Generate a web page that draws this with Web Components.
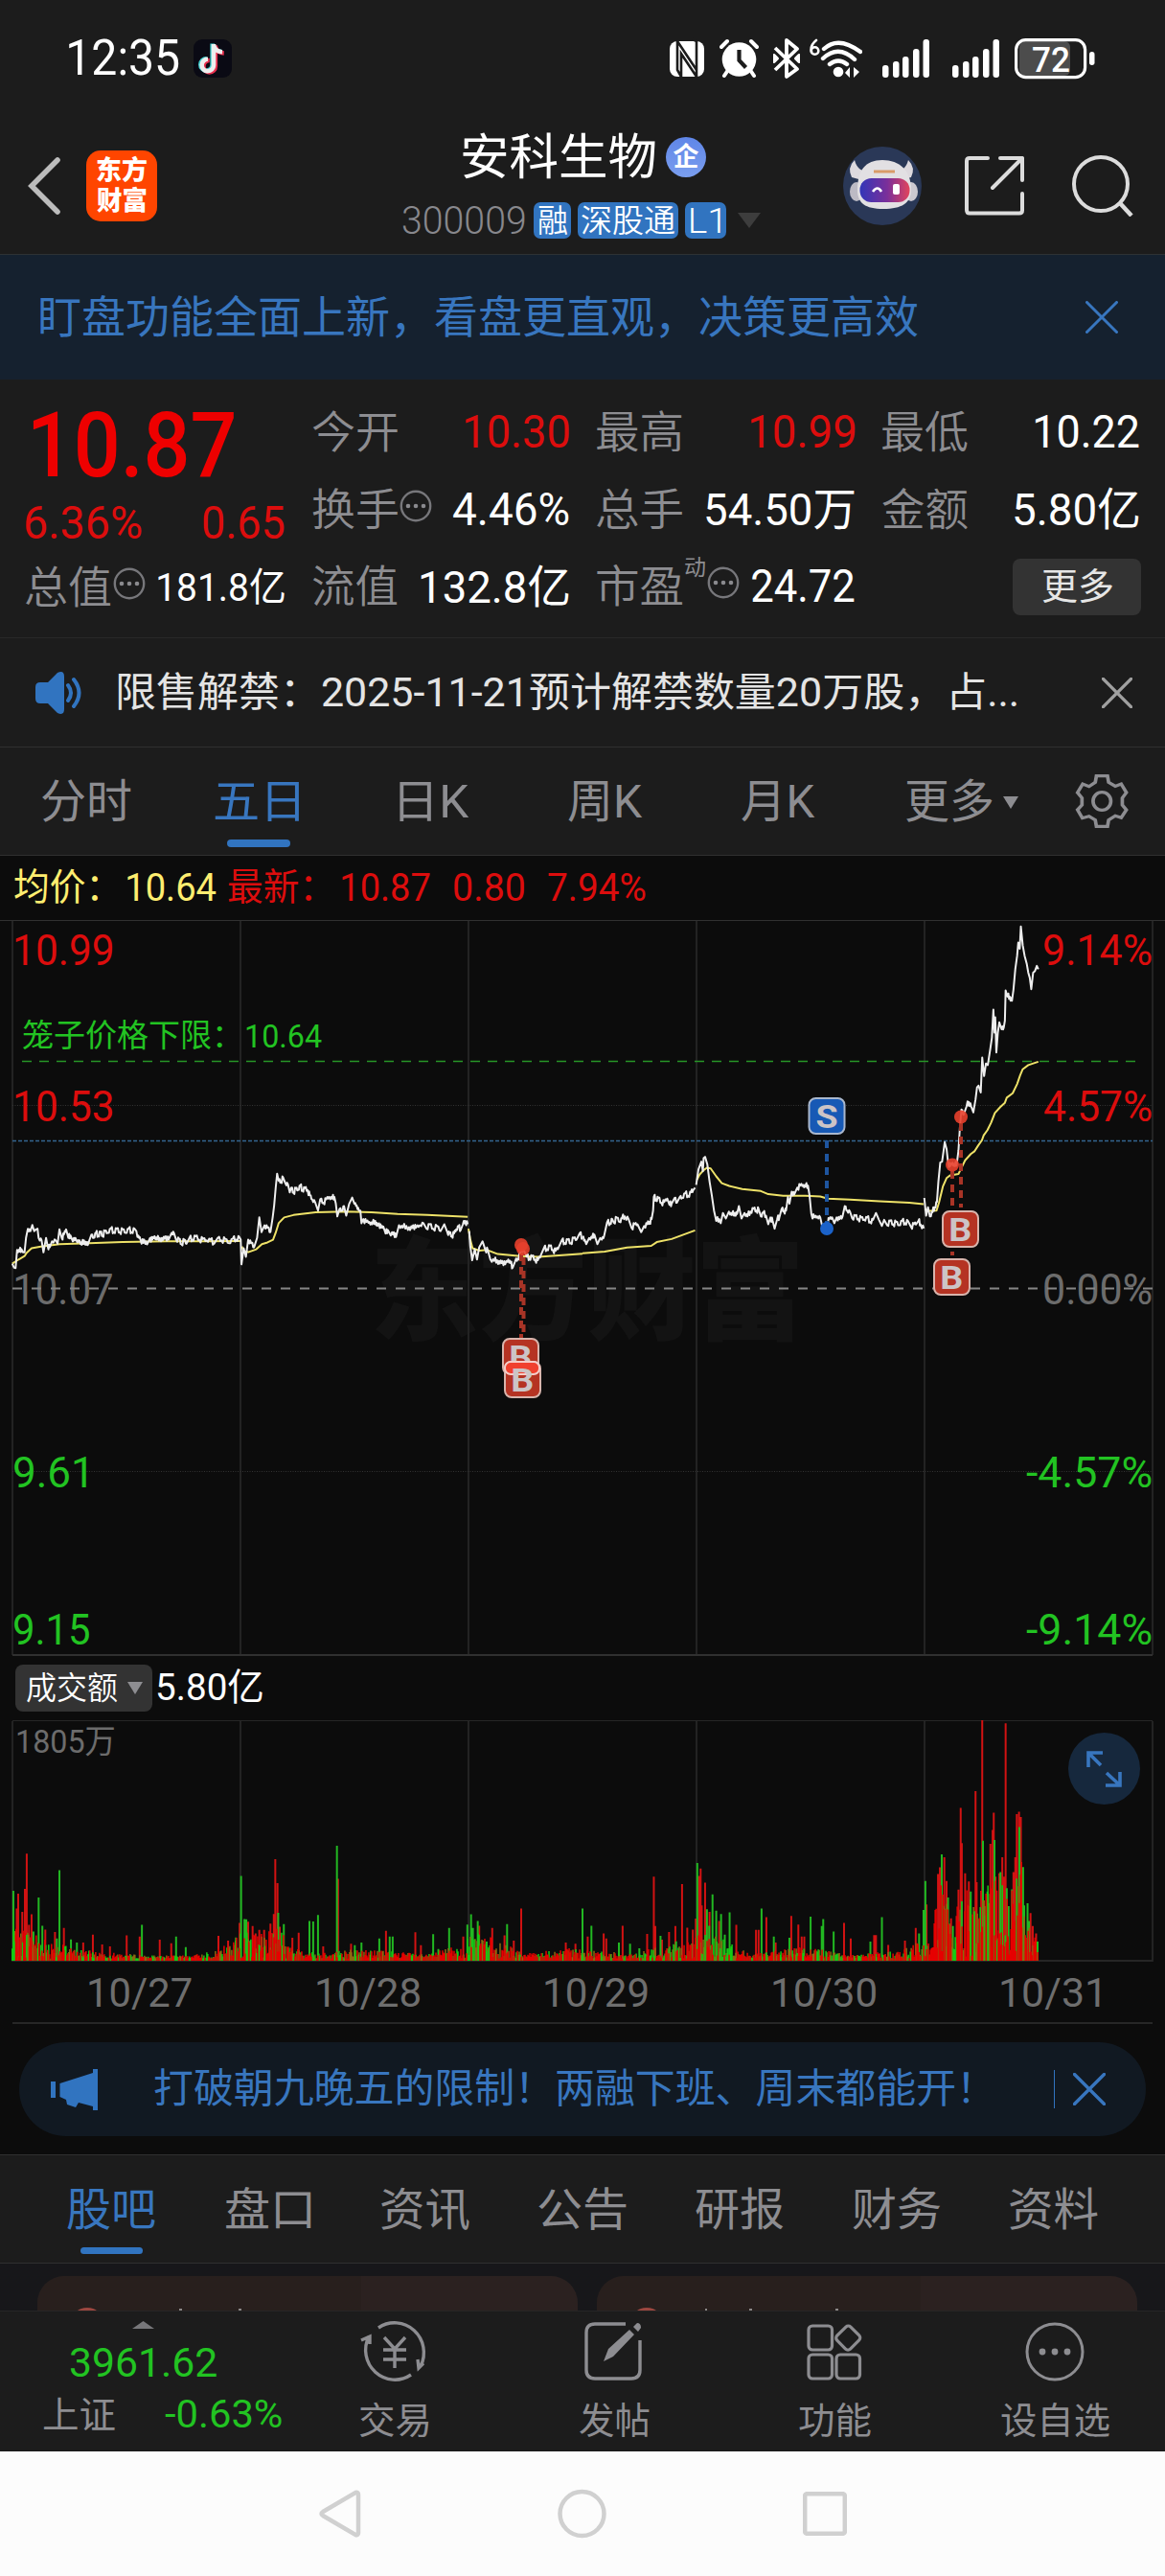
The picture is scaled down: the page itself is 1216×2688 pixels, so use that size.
<!DOCTYPE html>
<html lang="zh-CN">
<head>
<meta charset="utf-8">
<title>安科生物 300009</title>
<style>
html,body{margin:0;padding:0;background:#1c1c1c}
body{width:1216px;font-family:Roboto,"Noto Sans CJK SC",sans-serif;color:#fff}
</style>
</head>
<body>
<stock-page></stock-page>
<script>
const FAMILY = 'Roboto,"Noto Sans CJK SC",sans-serif';
const pen = document.createElement('canvas').getContext('2d');
// Ink extents of a string, so that text can be set to an exact visible width.
function ink(text, size, weight) {
  pen.font = `${weight} ${size}px ${FAMILY}`;
  const m = pen.measureText(text);
  return { left: m.actualBoundingBoxLeft, width: m.actualBoundingBoxLeft + m.actualBoundingBoxRight };
}
class FitText extends HTMLElement {
  constructor() { super(); this.attachShadow({ mode: 'open' }); }
  connectedCallback() {
    const w = +this.getAttribute('w'), s = +this.getAttribute('s'), wt = this.getAttribute('wt') || 400;
    const c = this.getAttribute('c');
    const m = ink(this.textContent.trim(), s, wt), k = w / m.width;
    this.shadowRoot.innerHTML = `<style>
      :host{display:block;flex:none;width:${w}px;height:${s}px;${c ? `color:${c};` : ''}font:${wt} ${s}px/${s}px ${FAMILY};white-space:nowrap}
      span{display:inline-block;transform-origin:0 0;transform:translateX(${m.left * k}px) scaleX(${k})}
    </style><span><slot></slot></span>`;
  }
}
customElements.define('fit-text', FitText);

function define(name, css, html) {
  customElements.define(name, class extends HTMLElement {
    constructor() {
      super();
      this.attachShadow({ mode: 'open' }).innerHTML =
        `<style>*{box-sizing:border-box}:host{display:block;box-sizing:border-box}svg{display:block;flex:none}${css}</style>` +
        (typeof html === 'function' ? html() : html);
    }
  });
}
const svgText = (x, w, base, s, fill, text, wt = 400) => {
  const m = ink(text, s, wt), k = w / m.width;
  return `<text transform="translate(${(x + m.left * k).toFixed(2)} ${base}) scale(${k.toFixed(4)} 1)" font-size="${s}" font-weight="${wt}" fill="${fill}">${text}</text>`;
};

/* ---------- status bar ---------- */
const signal = x => `<svg width="49" height="44" viewBox="921 39 49 44" style="margin-left:${x}px" fill="#fff">
  <rect x="921" y="68" width="6.5" height="13" rx="3"/><rect x="932" y="64" width="6.5" height="17" rx="3"/><rect x="942" y="59" width="6.5" height="22" rx="3"/><rect x="953" y="51" width="6.5" height="30" rx="3"/><rect x="963.5" y="41" width="6.5" height="40" rx="3"/></svg>`;
define('status-bar', `:host{display:flex;align-items:center;height:122px;padding:0 73px 0 72px}`, `
<fit-text w="115" s="52">12:35</fit-text>
<svg width="40" height="40" viewBox="0 0 40 40" style="margin-left:15px"><rect width="40" height="40" rx="9" fill="#0a0a14"/>
 <g fill="none" stroke-width="4.6"><path d="M20.5 5v22a6.2 6.2 0 1 1-6-6.2M20.5 6c.8 4 4 7 9 7.300" stroke="#3fd0d0" transform="translate(-.8 -.6)"/><path d="M21.500 5v22a6.200 6.200 0 1 1-6-6.200M21.500 6c.8 4 4 7 9 7.300" stroke="#e8304f" transform="translate(1.300 1.200)"/><path d="M21 5v22a6.200 6.200 0 1 1-6-6.200M21 6c.8 4 4 7 9 7.300" stroke="#eee"/></g></svg>
<svg width="36" height="44" viewBox="0 0 36 44" style="margin-left:auto"><rect y="4" width="36" height="37" rx="8" fill="#fff"/><path d="M8 4v30l4 7M8 4l20 30V11M12 41V17l16 24V4l-4 -2" fill="none" stroke="#1c1c1c" stroke-width="2.600"/></svg>
<svg width="41" height="44" viewBox="0 0 41 44" style="margin-left:16px"><g stroke="#fff" stroke-width="4" stroke-linecap="round"><path d="M2 10l6-6M39 10l-6-6M9 34l-4 6M32 34l4 6"/></g><circle cx="20.500" cy="23" r="17.800" fill="#fff"/><path d="M20.500 13v11l7 7.500" fill="none" stroke="#1c1c1c" stroke-width="4.200"/></svg>
<svg width="28" height="44" viewBox="0 0 28 44" style="margin-left:15px"><path d="M2 11L25 33 14 41V3l11 9L2 34M1 19v6l3-3zM27 19v6l-3-3z" fill="none" stroke="#fff" stroke-width="3.800" stroke-linejoin="round"/></svg>
<svg width="55" height="44" viewBox="0 0 55 44" style="margin-left:10px"><g fill="none" stroke="#fff" stroke-linecap="round"><path d="M7 3C2 7 1 11 2 15" stroke-width="2.600"/><circle cx="5.500" cy="14" r="3.800" stroke-width="2.600"/><path d="M15 12q15-14 38 3M14 22q16-15 33 1M21 28q9-7 18 0" stroke-width="4.400"/></g><circle cx="30" cy="36" r="5.300" fill="#fff"/><path d="M42 31v11l-5-5zM46 42V31l6 5z" fill="#fff"/></svg>
${signal(21)}${signal(24)}
<svg width="84" height="44" viewBox="0 0 84 44" style="margin-left:16px" font-family="Roboto"><rect x="5" y="4" width="53" height="36" rx="6" fill="#4c4c4c"/><rect x="1.600" y="2.600" width="72" height="39" rx="10" fill="none" stroke="#fff" stroke-width="3.200"/><rect x="78" y="15" width="5.500" height="14" rx="2.700" fill="#fff"/>${svgText(19, 38, 35.5, 37, '#fff', '72', 500)}</svg>`);

/* ---------- header ---------- */
define('app-header', `:host{display:flex;align-items:center;height:144px;padding-left:29px;border-bottom:1px solid #2d3234}
.logo{width:74px;height:74px;border-radius:15px;background:#ff4500;margin-left:26px;padding:8px 11px;display:flex;flex-direction:column;gap:5px}
.t{width:374px;height:143px;margin-left:256px;padding-top:16px;display:flex;flex-direction:column;gap:21px}
.r1{display:flex;align-items:center;height:52px;padding-left:63px;gap:11px}
.r2{display:flex;align-items:center;height:38px}
.tag{height:38px;border-radius:7px;background:#3174c0;display:flex;align-items:center;justify-content:center}
.q{width:42px;height:42px;border-radius:50%;background:linear-gradient(#5f86e8,#7a9eee);display:flex;align-items:center;justify-content:center}`, `
<svg width="35" height="62" viewBox="0 0 35 62"><path d="M31 4L4 31l27 27" fill="none" stroke="#bcbcbc" stroke-width="5.600" stroke-linecap="round"/></svg>
<div class="logo"><fit-text w="52" s="27" wt="900">东方</fit-text><fit-text w="52" s="27" wt="900">财富</fit-text></div>
<div class="t"><div class="r1"><fit-text w="201" s="51">安科生物</fit-text><div class="q"><fit-text w="27" s="27" wt="700">企</fit-text></div></div>
<div class="r2"><fit-text w="128" s="41" c="#88888d" wt="350">300009</fit-text>
<div class="tag" style="width:39px;margin-left:9px"><fit-text w="30" s="33" wt="350">融</fit-text></div>
<div class="tag" style="width:105px;margin-left:7px"><fit-text w="97" s="33" wt="350">深股通</fit-text></div>
<div class="tag" style="width:43px;margin-left:7px"><fit-text w="31" s="37" wt="350">L1</fit-text></div>
<svg width="24" height="16" style="margin-left:12px"><path d="M0 0h24L12 16z" fill="#3d3d3d"/></svg></div></div>
<svg width="82" height="82" viewBox="0 0 82 82" style="margin-left:86px"><defs><linearGradient id="v" x1="0" x2="1"><stop offset="0" stop-color="#3236b8"/><stop offset=".55" stop-color="#7b2f9a"/><stop offset="1" stop-color="#e2455c"/></linearGradient></defs>
<circle cx="41" cy="41" r="41" fill="#2a3857"/><path d="M12 14q-8 8-3 18l11 3 6-9q-11 0-14-12zM68 14q8 8 3 18l-11 3-6-9q11 0 14-12z" fill="#ddd9de"/><ellipse cx="14" cy="47" rx="7" ry="10" fill="#bcbac4"/><ellipse cx="71" cy="47" rx="7" ry="10" fill="#cbc8d0"/><path d="M15 45c0-20 8-31 26-31s30 11 30 31c0 14-10 20-29 20S15 59 15 45z" fill="#e2e0e3"/><rect x="17.500" y="33" width="52" height="25" rx="12" fill="url(#v)"/><path d="M32 26h22" stroke="#d99b68" stroke-width="3"/><path d="M31 47q5-7 9 0" fill="none" stroke="#fff" stroke-width="2.600"/><rect x="52" y="39" width="7" height="11" rx="2" fill="#fff"/></svg>
<svg width="62" height="62" viewBox="0 0 62 62" style="margin-left:45px"><path d="M24 2H5q-3 0-3 3v51q0 3.500 3 3.500h52q3 0 3-3V39M37 2h23v23M60 2L29 33" fill="none" stroke="#dcdcdc" stroke-width="4" stroke-linecap="round" stroke-linejoin="round"/></svg>
<svg width="64" height="64" viewBox="0 0 64 64" style="margin-left:50px"><circle cx="30" cy="30" r="28" fill="none" stroke="#dcdcdc" stroke-width="4"/><path d="M50 50l12 13" stroke="#dcdcdc" stroke-width="4.500"/></svg>`);

const cross = (s, c, w = 3, st = '') => `<svg width="${s}" height="${s}" viewBox="0 0 34 34" style="${st}"><path d="M1.500 1.500l31 31M32.500 1.500l-31 31" stroke="${c}" stroke-width="${w}" stroke-linecap="round"/></svg>`;

define('top-banner', `:host{display:flex;align-items:center;justify-content:space-between;height:130px;padding:0 49px 0 42px;background:#15212f}`,
`<fit-text w="916" s="46" c="#3876bf">盯盘功能全面上新，看盘更直观，决策更高效</fit-text>${cross(34, '#3876bf')}`);

/* ---------- quote panel ---------- */
const more = `<svg width="34" height="34" viewBox="0 0 34 34" style="margin:0 0 8px 2px"><circle cx="17" cy="17" r="15.200" fill="none" stroke="#77777b" stroke-width="2.400"/><g fill="#8a8a8e"><circle cx="9" cy="17" r="2.300"/><circle cx="17" cy="17" r="2.300"/><circle cx="25" cy="17" r="2.300"/></g></svg>`;
const RED = '#dc0d0d', G = '#8d8d91';
define('quote-cell', `:host{display:flex;align-items:center;justify-content:space-between}.l{display:flex;align-items:center}`, `<div class="l"><slot name="label"></slot></div><slot></slot>`);
const lab = t => `<fit-text slot="label" w="89" s="46" c="${G}" wt="350">${t}</fit-text>`;
const ic = more.replace('<svg', '<svg slot="label"');
define('quote-panel', `:host{display:grid;grid-template-columns:270px 268px 269px 268px;column-gap:29px;height:270px;padding:15px 27px 0 27px;border-bottom:1px solid #282828}
.c{display:flex;flex-direction:column}.c quote-cell{height:80.500px}
.btn{margin:0 -2px 0 auto;width:134px;height:59px;border-radius:8px;background:#333;display:flex;align-items:center;justify-content:center}`, `
<div class="c"><div style="height:106px;display:flex;align-items:center;padding-left:7px"><fit-text w="210" s="95" wt="500" c="#ee0000">10.87</fit-text></div>
<quote-cell style="height:58px"><fit-text slot="label" w="121" s="48" c="${RED}">6.36%</fit-text><fit-text w="85" s="48" c="${RED}">0.65</fit-text></quote-cell>
<quote-cell style="height:76px">${lab('总值')}${ic}<fit-text w="132" s="41">181.8亿</fit-text></quote-cell></div>
<div class="c"><quote-cell>${lab('今开')}<fit-text w="108" s="48" c="${RED}">10.30</fit-text></quote-cell>
<quote-cell>${lab('换手')}${ic}<fit-text w="121" s="48">4.46%</fit-text></quote-cell>
<quote-cell>${lab('流值')}<fit-text w="155" s="47">132.8亿</fit-text></quote-cell></div>
<div class="c"><quote-cell>${lab('最高')}<fit-text w="108" s="48" c="${RED}">10.99</fit-text></quote-cell>
<quote-cell>${lab('总手')}<fit-text w="155" s="47">54.50万</fit-text></quote-cell>
<quote-cell>${lab('市盈')}<fit-text slot="label" w="21" s="23" c="${G}" style="margin:0 0 40px 3px">动</fit-text>${ic}<fit-text w="107" s="48">24.72</fit-text></quote-cell></div>
<div class="c"><quote-cell>${lab('最低')}<fit-text w="108" s="48">10.22</fit-text></quote-cell>
<quote-cell>${lab('金额')}<fit-text w="130" s="47">5.80亿</fit-text></quote-cell>
<quote-cell><div class="btn"><fit-text w="73" s="38" c="#e6e6e6">更多</fit-text></div></quote-cell></div>`);

define('notice-bar', `:host{display:flex;align-items:center;height:114px;padding:0 34px 0 37px;border-bottom:1px solid #303030}`, `
<svg width="48" height="46" viewBox="0 0 48 46"><path d="M5 12h8L23 2q7-3 7 4v34q0 7-7 4L13 34H5q-5 0-5-5V17q0-5 5-5z" fill="#3174c0"/><path d="M34 15q6 8 0 16M40 9q11 14 0 28" fill="none" stroke="#3174c0" stroke-width="4" stroke-linecap="round"/></svg>
<fit-text w="938" s="42" c="#e4e4e4" style="margin-left:38px">限售解禁：2025-11-21预计解禁数量20万股，占...</fit-text>${cross(32, '#a0a0a0', 3.6, 'margin-left:auto')}`);

/* ---------- tabs ---------- */
define('period-tabs', `:host{display:grid;grid-template-columns:180px 180px 186px 172px 188px 216px 1fr;align-items:center;height:113px;border-bottom:1px solid #303030}
.t{display:flex;justify-content:center;align-items:center;height:112px;position:relative;padding-top:2px}.on::after{content:"";position:absolute;left:57px;top:96px;width:66px;height:8px;border-radius:4px;background:#3174c0}`, `
<div class="t"><fit-text w="93" s="48" c="${G}">分时</fit-text></div><div class="t on" style="padding-right:4px"><fit-text w="88" s="48" c="#3876bf">五日</fit-text></div>
<div class="t"><fit-text w="73" s="48" c="${G}">日K</fit-text></div><div class="t"><fit-text w="78" s="48" c="${G}">周K</fit-text></div><div class="t"><fit-text w="77" s="48" c="${G}">月K</fit-text></div>
<div class="t" style="justify-content:flex-start;padding-left:40px"><fit-text w="90" s="48" c="${G}">更多</fit-text><svg width="16" height="13" style="margin-left:11px"><path d="M0 0h16L8 13z" fill="${G}"/></svg></div>
<svg width="56" height="56" viewBox="1325 504 145 168" preserveAspectRatio="none"><g fill="none" stroke="${G}"><path d="M1383 509h30l3 20 18 12 16-7 14 27-11 17v22l11 15-14 25-16-6-18 13-3 20h-30l-3-20-17-12-18 6-13-26 12-15v-22l-12-17 14-27 17 8 17-13z" stroke-width="9.500"/><ellipse cx="1398" cy="588" rx="24" ry="28" stroke-width="9.500"/></g></svg>`);

define('price-info', `:host{display:flex;align-items:center;height:67px;padding-left:15px;background:#0c0c0c}`, `
<fit-text w="87" s="39" c="#ffee70">均价：</fit-text><fit-text w="93" s="41" c="#ffee70" style="margin-left:31px">10.64</fit-text>
<fit-text w="87" s="39" c="${RED}" style="margin-left:12px">最新：</fit-text><fit-text w="92" s="41" c="${RED}" style="margin-left:32px">10.87</fit-text><fit-text w="73" s="41" c="${RED}" style="margin-left:25px">0.80</fit-text><fit-text w="102" s="41" c="${RED}" style="margin-left:25px">7.94%</fit-text>`);

/* ---------- price chart ---------- */
const priceA = ['33,1060 38,1072 42,1073 46,1020 52,1025 58,1018 62,1027 66,1027 70,985 75,958 82,965 87,947 92,965 97,960 101,958 104,985 112,992 117,1027 124,985 128,1008 134,1012 140,995 150,992 155,1002 160,960 166,985 172,975 178,960 184,985 190,978 196,995 203,985 208,998 214,992 220,1005 226,992 232,1005 238,1000 246,975 252,985 258,970 264,978 270,968 276,978 282,965 290,970 298,958 306,968 314,958 322,968 330,960 338,970 346,958 354,968 362,958 367,965 370,982 376,982 381,1002 388,990 396,1004 404,985 410,990 416,980 422,990 430,985 438,992 446,980 454,990 462,970 468,970 474,990 482,988 488,1003 496,990 502,1002 510,985 518,990 526,980 536,990 546,988 556,992 566,990 576,1002 586,985 596,992 606,988 616,1000 626,988 636,990 644,982 648,990 650,1062 656,1015 662,1040 668,990 676,1000 684,1012 692,985 698,925 704,968 712,948 720,955 728,968 734,925 738,890 742,840 746,797 750,818 756,820 762,808 768,825 775,828 780,852 784,838 790,853 796,840 802,845 808,832 814,845 820,840 828,845 834,860 840,872 848,880 856,905 862,872 870,882 878,872 886,865 894,870 900,865 904,885 908,922 914,900 920,905 926,892 932,920 940,885 948,867 954,885 960,890 966,905 970,905 973,942 978,930 986,938 994,938 1002,945 1010,935 1016,950 1020,942 1026,955 1032,952 1038,972 1044,962 1052,978 1060,968 1066,982 1074,948 1084,955 1094,950 1104,962 1112,948 1120,955 1130,948 1140,942 1148,958 1156,945 1166,958 1176,950 1186,965 1196,945 1204,968 1210,972 1216,978 1222,972 1228,960 1234,952 1240,962 1246,945 1252,935 1259,945',
'1263,965 1266,1010 1271,1050 1278,1018 1284,1048 1290,1012 1299,995 1306,1018 1313,1020 1320,1048 1330,1052 1338,1050 1345,1060 1352,1052 1360,1062 1368,1048 1374,1058 1380,1072 1386,1055 1394,1045 1400,1030 1410,1020 1418,1040 1425,1045 1432,1038 1440,1048 1448,1050 1456,1035 1464,1015 1472,1018 1480,1008 1488,1020 1496,1022 1504,1012 1512,992 1520,1000 1528,990 1536,1000 1544,985 1552,990 1560,972 1568,985'];
const priceB = ['0,985 6,990 10,1003 18,985 26,985 32,975 40,1003 48,985 52,990 58,980 66,940 74,942 80,930 84,940 92,925 100,938 106,928 114,922 124,930 132,955 140,945 148,945 158,968 166,950 174,945 180,938 186,930 190,905 192,865 198,872 204,868 212,882 220,880 228,870 234,888 240,885 248,868 254,882 262,865 268,868 276,855 284,862 292,852 298,845 303,838',
'306,830 312,785 320,762 324,790 326,752 330,748 336,770 342,820 348,860 354,905 360,935 368,930 372,942 378,912 386,928 394,908 402,918 410,912 416,915 421,892 428,928 436,912 444,922 452,908 460,900 468,905 474,900 480,922 486,912 494,920 500,945 506,925 512,935 517,958 524,930 530,925 536,900 542,905 548,905 553,865 557,885 563,850 570,858 578,838 586,832 594,830 600,835 607,832 611,860 616,915 624,925 632,922 640,925 646,955 652,968 658,940 664,930 672,925 678,942 684,925 692,930 700,922 706,892 712,905 720,908 726,928 734,920 742,930 750,925 758,932 766,925 774,938 782,932 790,912 798,932 806,950 812,932 820,948 828,935 836,945 844,938 852,948 860,935 868,942 876,935 884,952 892,945 900,942 904,935 910,945 919,957',
'920,868 925,920 930,895 935,922 942,910 948,895 954,880 958,820 963,765 968,762 972,730 975,705 980,725 984,765 990,775 996,765 1002,775 1008,765 1012,730 1016,660 1020,610 1026,625 1034,600 1040,588 1046,600 1052,618 1058,580 1062,545 1066,540 1072,560 1076,458 1081,512 1086,475 1091,480 1098,430 1102,400 1106,318 1109,385 1111,340 1114,443 1118,385 1122,355 1128,375 1134,370 1137,350 1139,262 1144,280 1150,280 1156,292 1160,260 1165,200 1170,160 1173,122 1177,140 1180,75 1185,130 1190,160 1196,185 1200,210 1204,225 1208,258 1213,210 1218,205 1223,190 1227,200'];
const avgA = ['33,1060 50,1048 66,1038 72,1028 85,1015 110,1010 160,1003 240,1000 330,997 450,995 560,995 648,994', '651,1010 656,1025 670,1026 690,1018 705,1003 720,998 735,990 742,970 750,942 765,925 790,918 850,910 930,908 1000,910 1070,915 1150,918 1259,923', '1261,958 1266,990 1272,1015 1290,1022 1310,1020 1340,1032 1400,1038 1450,1040 1568,1031'];
const avgB = ['0,1030 60,1025 120,1013 185,1008 200,997 240,988 303,963', '308,815 315,800 325,788 335,780 345,782 360,805 375,825 395,833 430,842 480,848 500,857 540,862 600,862 640,864 660,870 720,873 800,878 880,882 918,886', '921,900 932,906 953,905 960,880 970,835 980,810 990,802 1012,798 1020,780 1030,758 1045,740 1055,732 1065,715 1075,700 1080,685 1090,670 1100,648 1110,620 1125,602 1137,590 1142,575 1158,562 1170,535 1178,510 1185,492 1200,480 1227,470'];
const lines = (a, c) => a.map(p => `<polyline points="${p}" fill="none" stroke="${c}" stroke-width="2" stroke-linejoin="round" vector-effect="non-scaling-stroke"/>`).join('');
// Minute ticks between the sampled points: small alternating moves on the flat stretches.
const ticks = s => {
  const p = s.split(' ').map(q => q.split(',').map(Number)), out = [s.split(' ')[0]];
  for (let i = 1; i < p.length; i++) {
    const [a, b] = p[i - 1], [c, d] = p[i];
    if (c - a >= 6 && Math.abs(d - b) < 16) {
      const j = [7, -6, 9, -4, 5, -9][i % 6];
      out.push(`${a + (c - a) * .4},${b + (d - b) * .4 + j} ${a + (c - a) * .7},${b + (d - b) * .7 - j * .7}`);
    }
    out.push(`${c},${d}`);
  }
  return out.join(' ');
};
const days = [13, 251, 489, 727, 965, 1203];
const tag = (x, y, t, f = '#b53323', s = '#d8b4ac', mid = '') => `<rect x="${x}" y="${y}" width="37" height="37" rx="7" fill="${f}" stroke="${s}" stroke-width="2"/>${mid}${svgText(x + (t === 'B' ? 8.500 : 8), 21, y + 30.500, 34, '#ccc4c6', t, 700)}`;
const GR = '#22c322', GY = '#6c6c6c';
define('price-chart', `:host{height:768px;background:#0c0c0c;font-family:${FAMILY}}`, () => `
<svg width="1216" height="768" viewBox="0 960 1216 768">
${svgText(391, 442, 1389, 117, '#131313', '东方财富', 900)}
<path d="M0 960.500H1216" stroke="#303030"/><path d="${days.map(x => `M${x} 961V1727`).join('')}" stroke="#232323" stroke-width="2"/><path d="M13 1727H1203" stroke="#303030" stroke-width="2"/>
<path d="M13 1153.500H1203M13 1535.500H1203" stroke="#333" stroke-dasharray="1 1.500"/>
<path d="M13 1190.500H1203" stroke="#33648f" stroke-width="1.300" stroke-dasharray="4 2"/>
${svgText(16, 101, 1361, 44, GY, '10.07')}${svgText(1090, 112, 1361, 44, GY, '0.00%')}
<path d="M13 1344.500H1203" stroke="#858585" stroke-width="2" stroke-dasharray="10 10"/>
<path d="M23 1107.500H1186" stroke="#279527" stroke-width="1.400" stroke-dasharray="10 8"/>
${svgText(16, 101, 1007, 44, RED, '10.99')}${svgText(16, 101, 1170, 44, RED, '10.53')}${svgText(15, 75, 1552, 44, GR, '9.61')}${svgText(15, 78, 1716, 44, GR, '9.15')}
${svgText(1090, 112, 1007, 44, RED, '9.14%')}${svgText(1090, 112, 1170, 44, RED, '4.57%')}${svgText(1071, 131, 1552, 44, GR, '-4.57%')}${svgText(1071, 131, 1716, 44, GR, '-9.14%')}
${svgText(24, 208, 1092, 33, GR, '笼子价格下限：')}${svgText(257, 79, 1093, 34, GR, '10.64')}
<g transform="translate(0 940) scale(.38776 .35714)">${lines(avgA, '#eee268')}${lines(priceA.map(ticks), '#eee')}</g>
<g transform="translate(608 940) scale(.38776 .35714)">${lines(avgB, '#eee268')}${lines(priceB.map(ticks), '#eee')}</g>
<g stroke-width="4" stroke-dasharray="8 6"><path d="M863 1190V1276" stroke="#1e559f"/><path d="M544 1308V1400M546.500 1312V1416M1003 1172V1260M994 1222V1310" stroke="#a83426"/></g>
<g fill="#e8402c" fill-opacity=".9"><circle cx="544" cy="1299" r="7"/><circle cx="546" cy="1303" r="7"/><circle cx="1003" cy="1165.500" r="7"/><circle cx="994" cy="1215.500" r="7"/></g><circle cx="863" cy="1282" r="7" fill="#1b62c9"/>
${tag(844.5, 1146, 'S', '#1759b5', '#a9b7cd')}${tag(984, 1264, 'B')}${tag(975, 1314, 'B')}${tag(525, 1397, 'B')}${tag(527, 1421, 'B', '#b53323', '#d8b4ac', '<rect x="527" y="1421" width="36" height="13" rx="6" fill="#f0412f" stroke="#f5cdc8" stroke-width="2"/>')}
</svg>`);

define('turnover-row', `:host{display:flex;align-items:center;height:67px;padding-left:16px;background:#0c0c0c}
.b{width:143px;height:49px;border-radius:8px;background:#333;display:flex;align-items:center;padding-left:12px;gap:11px}`,
`<div class="b"><fit-text w="94" s="33" wt="350">成交额</fit-text><svg width="16" height="13"><path d="M0 0h16L8 13z" fill="#8e8e92"/></svg></div><fit-text w="110" s="39" style="margin-left:5px">5.80亿</fit-text>`);

/* ---------- volume chart ---------- */
const volA = { r: '72,1113 67,1203 49,1215 60,1262 85,1268 45,1253 78,1295 172,1303 122,1307 250,1320 341,1322 430,1333 376,1325 224,1340 461,1342 588,1323 275,1345 296,1350 645,1290 668,1287 680,1298 698,1308 711,1308 728,1292 741,1127 747,1188 737,1267 753,1300 787,1328 804,1315 870,1350 910,1177 1039,1310 1118,1314 1247,1325 1290,1297 1325,1303 1358,1322 1403,1253 1383,1335 1523,1340 1549,1343 688,1317 148,1313 614,1335 945,1343 1133,1347',
  g: '36,1208 104,1225 160,1155 114,1297 90,1312 191,1332 207,1340 382,1295 474,1325 500,1352 649,1170 658,1280 663,1281 704,1325 749,1264 764,1293 833,1285 843,1286 856,1270 907,1093 955,1347 973,1340 1021,1330 1049,1325 1057,1325 1166,1319 1209,1303 1258,1294 1268,1268 1273,1303 1286,1285 1365,1293 1310,1338 635,1327 153,1330 1180,1357',
  e: '33,75 80,80 130,50 200,25 300,15 400,8 520,8 600,30 650,70 700,60 745,100 780,30 850,15 950,25 1050,20 1150,10 1240,40 1290,70 1350,40 1420,15 1568,30' };
const volB = { r: '14,1325 57,1317 64,1330 108,1297 174,1318 192,1172 196,1298 214,1333 233,1313 250,1298 268,1191 282,1302 297,1307 305,1279 313,1170 318,1151 330,1187 321,1245 342,1262 368,1285 414,1295 467,1308 474,1308 495,1275 520,1340 562,1272 581,1294 590,1325 597,1325 704,1290 722,1330 785,1321 790,1321 823,1346 868,1335 897,1303 926,1243 957,1165 962,1148 974,1122 980,1183 992,1278 1007,1272 1012,1205 1018,996 1021,1086 1030,1163 1040,1184 1058,953 1061,1186 1054,1262 1073,1208 1076,771 1098,1088 1104,1052 1107,1008 1112,1172 1115,1207 1122,1163 1130,1122 1135,1172 1139,780 1160,1160 1165,1122 1169,1012 1175,1006 1180,1019 1206,1265 1212,1298 1221,1317',
  g: '0,1253 24,1297 98,1340 128,1343 153,1355 210,1323 252,1337 309,1137 335,1255 350,1217 360,1259 373,1267 341,1297 383,1320 396,1263 482,1253 515,1325 557,1328 614,1274 648,1280 644,1298 676,1312 806,1275 775,1338 906,1317 918,1257 923,1183 967,1115 984,1225 975,1254 997,1298 1021,1235 1045,1210 1068,1280 1078,1080 1083,1247 1090,1210 1109,1078 1125,1160 1142,1201 1147,1247 1156,1204 1176,1045 1186,1147 1189,1245 1198,1240 1225,1338 1202,1285',
  e: '0,20 60,20 130,10 200,30 290,50 320,90 380,50 430,25 450,10 580,30 640,25 720,10 850,20 910,45 940,40 955,200 980,170 990,80 1000,40 1010,170 1040,180 1060,110 1100,220 1135,210 1150,110 1165,300 1180,320 1190,110 1215,60 1227,40' };
function volume(v, seed) {
  const env = v.e.split(' ').map(p => p.split(',').map(Number));
  const rnd = () => (seed = (seed * 1103515245 + 12345) % 2147483648) / 2147483648;
  let out = { '#8c6a10': '', '#14cc14': '', '#e60000': '' };
  for (let i = 0, x = env[0][0]; x < env[env.length - 1][0]; x += 2.58) {
    while (i < env.length - 2 && env[i + 1][0] < x) i++;
    const f = (x - env[i][0]) / (env[i + 1][0] - env[i][0]), h = env[i][1] + f * (env[i + 1][1] - env[i][1]);
    const r = rnd(), c = r < .52 ? '#e60000' : r < .74 ? '#14cc14' : '#8c6a10';
    out[c] += `M${x.toFixed(1)} 1387v-${(6 + h * rnd() ** .9).toFixed(1)}`;
  }
  const add = (s, c) => s.split(' ').forEach(p => { const [x, y] = p.split(','); out[c] += `M${x} 1387V${y}`; });
  const path = (d, c, w) => `<path d="${d}" stroke="${c}" stroke-width="${w}" vector-effect="non-scaling-stroke"/>`;
  let base = Object.entries(out).map(([c, d]) => path(d, c, 1.5)).join('');
  out = { '#d21212': '', '#22b822': '' }; add(v.g, '#22b822'); add(v.r, '#d21212');
  return Object.entries(out).map(([c, d]) => path(d, c, 2)).join('') + base;
}
define('volume-chart', `:host{height:252px;background:#0c0c0c;font-family:${FAMILY};position:relative}button{all:unset;position:absolute;left:1115px;top:13px}`, () => `
<svg width="1216" height="252" viewBox="0 1795 1216 252"><path d="M13 1795.500H1203" stroke="#262626"/><path d="${days.map(x => `M${x} 1796V2047`).join('')}" stroke="#232323" stroke-width="2"/><path d="M13 2046H1203" stroke="#262626" stroke-width="2"/>
${svgText(18, 101, 1829, 34, GY, '1805万')}
<g transform="translate(0 1480) scale(.38776 .40816)">${volume(volA, 7)}</g><g transform="translate(608 1480) scale(.38776 .40816)">${volume(volB, 42)}</g></svg>
<button aria-label="全屏"><svg width="75" height="75" viewBox="0 0 75 75"><circle cx="37.500" cy="37.500" r="37.500" fill="#16283d"/><path d="M21 36V21h15M21 21l13 13M54 41v14H39M54 55L40 42" fill="none" stroke="#3876bf" stroke-width="3.600"/></svg></button>`);

define('date-axis', `:host{display:flex;align-items:center;height:65px;margin:0;padding:0 0 0 93px;gap:131px;background:linear-gradient(#272727,#272727) 13px 100%/1190px 2px no-repeat #0c0c0c}`,
  ['10/27', '10/28', '10/29', '10/30', '10/31'].map(d => `<fit-text w="${d === '10/31' ? 103 : 107}" s="43" c="#6e6e6e">${d}</fit-text>`).join(''));

define('promo-pill', `:host{height:137px;padding:19px 20px 0;background:#0c0c0c;border-bottom:1px solid #303030}
.p{height:98px;border-radius:49px;background:#111922;display:flex;align-items:center;padding-left:33px}`, `
<div class="p"><svg width="49" height="43" viewBox="0 0 49 43" fill="#3174c0"><path d="M0 13h5v17H0zM9.500 15L44 4V0h5v43h-5v-4l-15-4-3 5-9-3-1-5-6.500-3z"/></svg>
<fit-text w="851" s="42" c="#3876bf" style="margin-left:59px">打破朝九晚五的限制！两融下班、周末都能开！</fit-text>
<svg width="1" height="40" style="margin-left:88px"><path d="M.5 0v40" stroke="#3174c0"/></svg>${cross(34, '#3876bf', 3.4, 'margin-left:19px')}</div>`);

define('content-tabs', `:host{display:flex;height:113px;padding-left:34px;border-bottom:1px solid #303030}
.t{width:164px;display:flex;justify-content:center;align-items:center;position:relative}.on::after{content:"";position:absolute;left:50px;top:96px;width:65px;height:7px;border-radius:4px;background:#3174c0}`,
  ['股吧', '盘口', '资讯', '公告', '研报', '财务', '资料'].map((t, i) => `<div class="t${i ? '' : ' on'}"><fit-text w="${i === 1 ? 89 : 92}" s="47" c="${i ? G : '#3876bf'}">${t}</fit-text></div>`).join(''));

define('card-strip', `:host{display:flex;gap:20px;height:49px;overflow:hidden;padding:13px 29px 0 39px;background:#17171a}
.c{width:564px;height:80px;border-radius:28px;background:linear-gradient(90deg,#281f1d 60%,#2b2120 60%);flex:none}`, `
<div class="c"><svg width="564" height="36"><circle cx="52" cy="51" r="18" fill="#9c4740"/><path d="M148 35h3M210 35h3" stroke="#aaa" stroke-width="1.500"/></svg></div>
<div class="c"><svg width="564" height="36"><circle cx="52" cy="51" r="18" fill="#9c4740"/><path d="M113 35h2M159 35h3M249 35h3" stroke="#aaa" stroke-width="1.500"/></svg></div>`);

/* ---------- bottom navigation ---------- */
define('nav-item', `:host{display:flex;flex-direction:column;align-items:center;width:230px;padding-top:9px;gap:20px}`, `<slot name="icon"></slot><slot></slot>`);
define('bottom-nav', `:host{display:flex;height:147px;border-top:1px solid #262626}
.i{width:297px;display:flex;flex-direction:column}.row{display:flex;align-items:center}`, `
<div class="i"><svg width="23" height="8" style="margin:10px 0 0 138px"><path d="M0 8L11.500 0 23 8z" fill="#77777a"/></svg>
<fit-text w="152" s="43" c="${GR}" style="margin:14px 0 0 74px">3961.62</fit-text>
<div class="row" style="margin:13px 0 0 45px"><fit-text w="75" s="38" c="${G}">上证</fit-text><fit-text w="122" s="40" c="${GR}" style="margin-left:52px">-0.63%</fit-text></div></div>
<nav-item><svg slot="icon" width="72" height="66" viewBox="0 0 72 66" fill="none" stroke="${G}" stroke-width="3.400"><path d="M19 8A30.500 31 0 0 1 63 48M66 45l-5 5-1-9M53 57A30.500 31 0 0 1 9 17M1 21l9-4v8M25 18l11 12 11-12M36 30v20M24 31h24M24 41h24"/></svg><fit-text w="73" s="38" c="${G}">交易</fit-text></nav-item>
<nav-item><svg slot="icon" width="62" height="66" viewBox="0 0 62 66" fill="none" stroke="${G}" stroke-width="3.400"><path d="M43 4H11Q2 4 2 13v39q0 9 9 9h38q9 0 9-9V21"/><path d="M20 43l5-13L47 10l5 5-22 23zM51 7l4-4q4 0 4 5l-3 4z" fill="${G}" stroke="none"/></svg><fit-text w="73" s="38" c="${G}">发帖</fit-text></nav-item>
<nav-item><svg slot="icon" width="58" height="66" viewBox="0 0 58 66" fill="none" stroke="${G}" stroke-width="3.200"><rect x="2" y="6" width="24.500" height="25" rx="4"/><rect x="2" y="36" width="24.500" height="25" rx="4"/><rect x="31" y="36" width="24.500" height="25" rx="4"/><rect x="33.500" y="8.500" width="19.500" height="20" rx="3.500" transform="rotate(45 43.200 18.500)"/></svg><fit-text w="75" s="38" c="${G}">功能</fit-text></nav-item>
<nav-item><svg slot="icon" width="62" height="66" viewBox="0 0 62 66"><circle cx="31" cy="33" r="29" fill="none" stroke="${G}" stroke-width="3"/><g fill="${G}"><circle cx="18" cy="33" r="3.400"/><circle cx="31" cy="33" r="3.400"/><circle cx="44" cy="33" r="3.400"/></g></svg><fit-text w="113" s="38" c="${G}">设自选</fit-text></nav-item>`);

define('system-nav', `:host{display:flex;align-items:center;height:130px;background:#fcfcfc;padding-left:333px}`, `
<svg width="44" height="52" viewBox="0 0 44 52" fill="none" stroke="#d0d0d0" stroke-width="4.500"><path d="M4 24L38 4q3-1 3 2v40q0 3-3 2L4 28q-3-2 0-4z"/></svg>
<svg width="51" height="52" viewBox="0 0 51 52" fill="none" stroke="#d0d0d0" stroke-width="4.500" style="margin-left:205px"><circle cx="25.500" cy="26" r="23"/></svg>
<svg width="46" height="46" viewBox="0 0 46 46" fill="none" stroke="#d0d0d0" stroke-width="4.500" style="margin-left:205px"><rect x="2.200" y="2.200" width="41.600" height="41.600" rx="2"/></svg>`);

define('stock-page', `:host{display:flex;flex-direction:column;width:1216px;height:2688px;background:#1c1c1c;overflow:hidden}:host>*{flex:none}`,
`<status-bar></status-bar><app-header></app-header><top-banner></top-banner><quote-panel></quote-panel><notice-bar></notice-bar><period-tabs></period-tabs><price-info></price-info><price-chart></price-chart><turnover-row></turnover-row><volume-chart></volume-chart><date-axis></date-axis><promo-pill></promo-pill><content-tabs></content-tabs><card-strip></card-strip><bottom-nav></bottom-nav><system-nav></system-nav>`);
</script>
</body>
</html>
